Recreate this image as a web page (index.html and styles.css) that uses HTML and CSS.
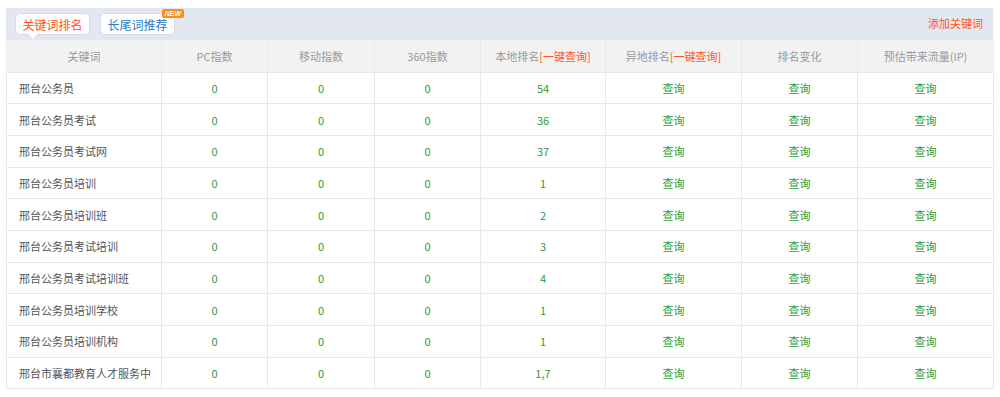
FILE: index.html
```html
<!DOCTYPE html>
<html lang="zh-CN">
<head>
    <meta charset="UTF-8" />
    <title>关键词排名</title>
    <link rel="stylesheet" href="styles.css">
</head>
<body>
    <div class="panel">
        <div class="toolbar">
            <div class="tabs">
                <a href="#" class="tab active">关键词排名</a>
                <a href="#" class="tab">长尾词推荐<span class="badge-new">NEW</span></a>
            </div>
            <a href="#" class="add-link">添加关键词</a>
        </div>

        <table class="rank-table">
            <colgroup>
                <col style="width: 155px">
                <col style="width: 106px">
                <col style="width: 107px">
                <col style="width: 106px">
                <col style="width: 125px">
                <col style="width: 136px">
                <col style="width: 116px">
                <col style="width: 136px">
            </colgroup>
            <thead>
                <tr>
                    <th>关键词</th>
                    <th>PC指数</th>
                    <th>移动指数</th>
                    <th>360指数</th>
                    <th>本地排名<span class="hl">[一键查询]</span></th>
                    <th>异地排名<span class="hl">[一键查询]</span></th>
                    <th>排名变化</th>
                    <th>预估带来流量(IP)</th>
                </tr>
            </thead>
            <tbody>
                <tr><td class="kw">邢台公务员</td><td>0</td><td>0</td><td>0</td><td>54</td><td><a href="#">查询</a></td><td><a href="#">查询</a></td><td><a href="#">查询</a></td></tr>
                <tr><td class="kw">邢台公务员考试</td><td>0</td><td>0</td><td>0</td><td>36</td><td><a href="#">查询</a></td><td><a href="#">查询</a></td><td><a href="#">查询</a></td></tr>
                <tr><td class="kw">邢台公务员考试网</td><td>0</td><td>0</td><td>0</td><td>37</td><td><a href="#">查询</a></td><td><a href="#">查询</a></td><td><a href="#">查询</a></td></tr>
                <tr><td class="kw">邢台公务员培训</td><td>0</td><td>0</td><td>0</td><td>1</td><td><a href="#">查询</a></td><td><a href="#">查询</a></td><td><a href="#">查询</a></td></tr>
                <tr><td class="kw">邢台公务员培训班</td><td>0</td><td>0</td><td>0</td><td>2</td><td><a href="#">查询</a></td><td><a href="#">查询</a></td><td><a href="#">查询</a></td></tr>
                <tr><td class="kw">邢台公务员考试培训</td><td>0</td><td>0</td><td>0</td><td>3</td><td><a href="#">查询</a></td><td><a href="#">查询</a></td><td><a href="#">查询</a></td></tr>
                <tr><td class="kw">邢台公务员考试培训班</td><td>0</td><td>0</td><td>0</td><td>4</td><td><a href="#">查询</a></td><td><a href="#">查询</a></td><td><a href="#">查询</a></td></tr>
                <tr><td class="kw">邢台公务员培训学校</td><td>0</td><td>0</td><td>0</td><td>1</td><td><a href="#">查询</a></td><td><a href="#">查询</a></td><td><a href="#">查询</a></td></tr>
                <tr><td class="kw">邢台公务员培训机构</td><td>0</td><td>0</td><td>0</td><td>1</td><td><a href="#">查询</a></td><td><a href="#">查询</a></td><td><a href="#">查询</a></td></tr>
                <tr><td class="kw">邢台市襄都教育人才服务中</td><td>0</td><td>0</td><td>0</td><td>1,7</td><td><a href="#">查询</a></td><td><a href="#">查询</a></td><td><a href="#">查询</a></td></tr>
            </tbody>
        </table>
    </div>
</body>
</html>
```

FILE: styles.css
```css
/* Reset */
* {
    box-sizing: border-box;
    margin: 0;
    padding: 0;
}

body {
    background-color: #fff;
    padding: 8px 7px 0 6px;
    font-family: "Microsoft YaHei", "Noto Sans CJK SC", "Noto Sans", sans-serif;
    font-size: 11px;
    color: #555;
}

a {
    text-decoration: none;
}

/* Panel */
.panel {
    width: 987px;
}

/* Top bar with tabs */
.toolbar {
    height: 32px;
    background-color: #e3e8f0;
    display: flex;
    justify-content: space-between;
    align-items: flex-start;
    padding: 5px 10px 0 9px;
}

.tabs {
    display: flex;
    gap: 10px;
}

.tab {
    position: relative;
    display: flex;
    align-items: center;
    justify-content: center;
    width: 75px;
    height: 22px;
    background-color: #fff;
    border: 1px solid #d5dbe5;
    border-radius: 5px;
    color: #2b7bc8;
    font-size: 12px;
}

.tab.active {
    color: #ff5420;
}

/* little pointer under the active tab */
.tab.active::after {
    content: '';
    position: absolute;
    left: 13px;
    bottom: -5px;
    border-left: 4px solid transparent;
    border-right: 4px solid transparent;
    border-top: 5px solid #fff;
}

.badge-new {
    position: absolute;
    top: -5px;
    right: -10px;
    height: 9px;
    padding: 0 3px;
    background-color: #ff8a1e;
    border-radius: 2px;
    color: #fff;
    font-size: 7px;
    line-height: 9px;
    font-style: italic;
    font-weight: bold;
    font-family: "Liberation Sans", sans-serif;
}

.add-link {
    color: #ff5420;
    font-size: 11px;
    line-height: 22px;
    margin-top: -1px;
}

/* Table */
.rank-table {
    width: 987px;
    table-layout: fixed;
    border-collapse: collapse;
}

.rank-table th,
.rank-table td {
    height: 31.7px;
    border: 1px solid #e8e8e8;
    text-align: center;
    vertical-align: middle;
    white-space: nowrap;
}

.rank-table th {
    height: 32px;
    background-color: #f2f2f2;
    color: #999;
    font-weight: normal;
    border-top: none;
}

.rank-table .hl {
    color: #ff5420;
}

.rank-table td {
    color: #2f9a35;
}

.rank-table td.kw {
    text-align: left;
    padding-left: 12px;
    color: #555;
}

.rank-table td a {
    color: #2f9a35;
}
```
